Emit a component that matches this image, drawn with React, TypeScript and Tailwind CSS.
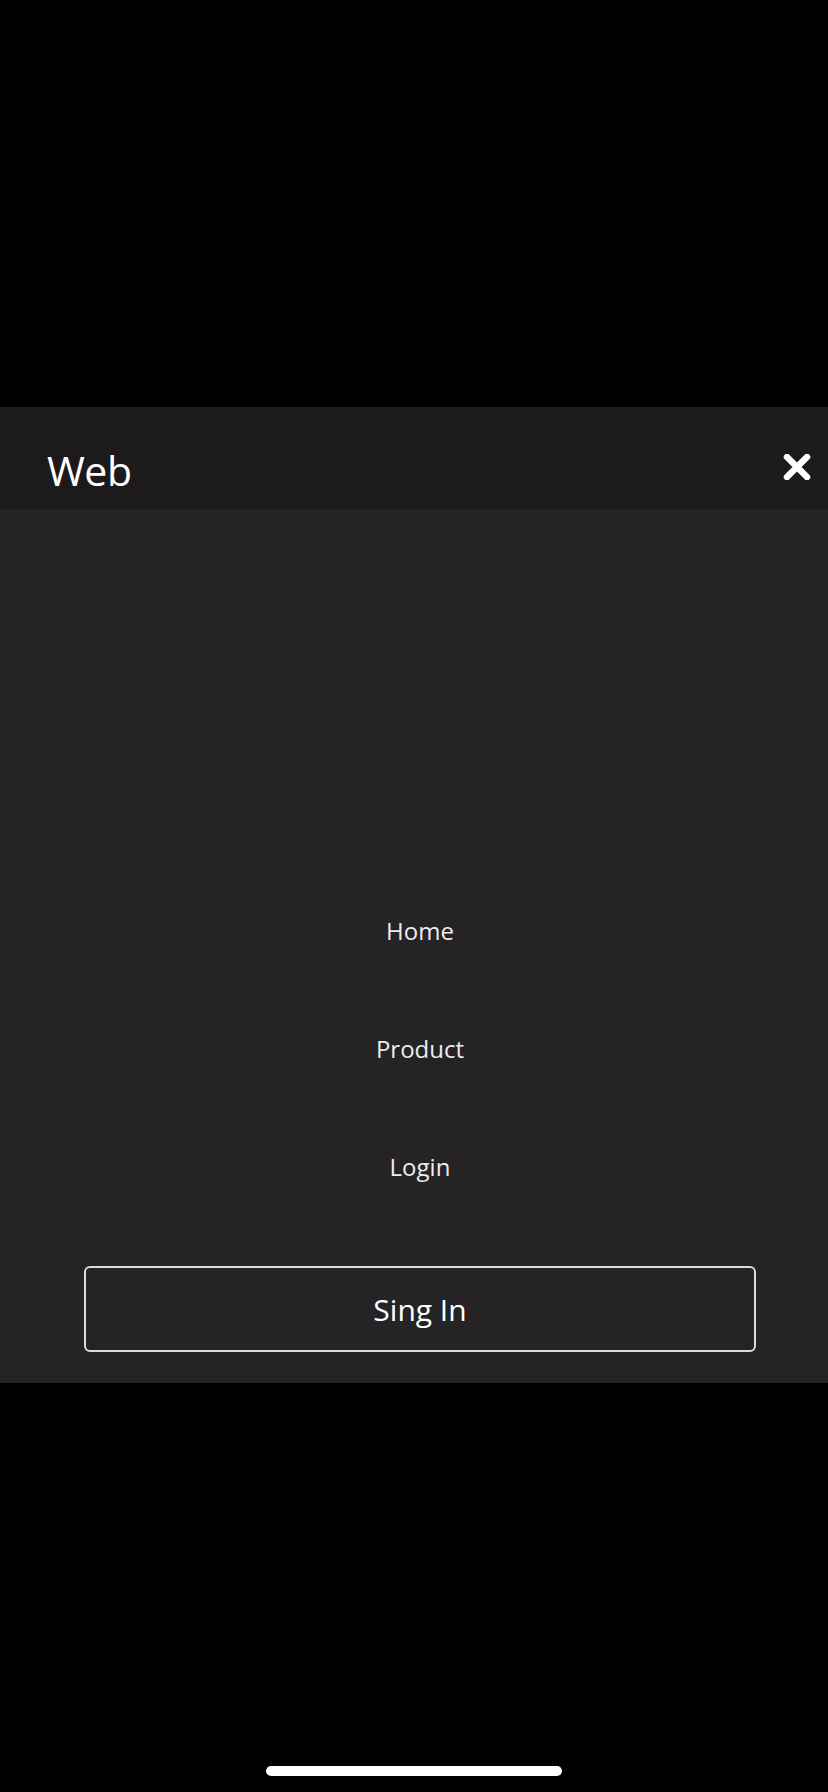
import React from 'react';

const font = { fontFamily: '"Open Sans", "Noto Sans", sans-serif' };

const CloseIcon = () => (
    <svg width="30" height="26" viewBox="0 0 30 26" className="text-white">
        <path d="M5 3 L25 23 M25 3 L5 23" stroke="currentColor" strokeWidth="6.5" strokeLinecap="round" fill="none" />
    </svg>
);

const MenuLink = ({ children }: React.PropsWithChildren) => (
    <a className="block h-[32px] leading-[32px] text-[24px] text-[#ececec]">{children}</a>
);

const App = () => {
    return (
        <div className="min-h-[1792px] w-full bg-black flex flex-col" style={font}>
            <div className="h-[407px]" />

            {/* header */}
            <div className="h-[102px] bg-[#1c1a1b] flex items-start justify-between pl-[47px] pr-[16px]">
                <h1 className="mt-[42px] text-[41px] leading-[42px] tracking-[-0.5px] text-white">Web</h1>
                <button className="mt-[47px]">
                    <CloseIcon />
                </button>
            </div>

            {/* menu */}
            <div className="h-[874px] bg-[#252325] pt-[406px]">
                <div className="ml-[84px] w-[672px] flex flex-col items-center">
                    <nav className="flex flex-col items-center gap-[86px]">
                        <MenuLink>Home</MenuLink>
                        <MenuLink>Product</MenuLink>
                        <MenuLink>Login</MenuLink>
                    </nav>
                    <button className="mt-[83px] w-full h-[86px] rounded-[6px] border-2 border-[#dcdcdc] text-[30px] text-white">
                        Sing In
                    </button>
                </div>
            </div>

            <div className="flex-1 flex items-end justify-center pb-[16px]">
                <div className="w-[296px] h-[10px] rounded-full bg-white" />
            </div>
        </div>
    );
};

export default App;
